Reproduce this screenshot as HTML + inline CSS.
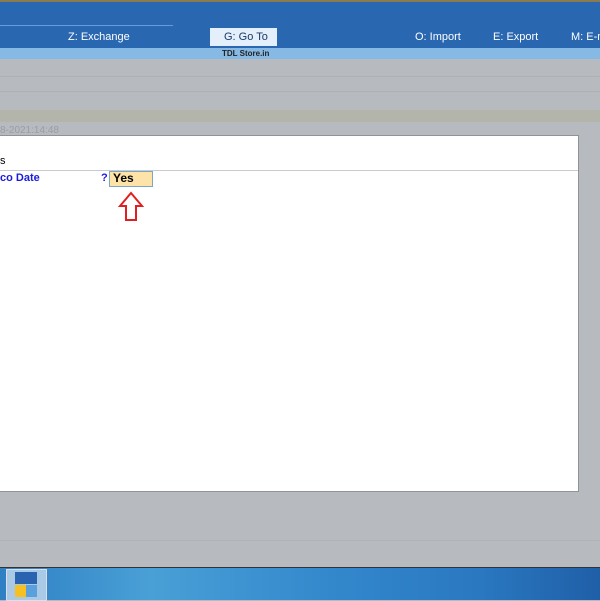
<!DOCTYPE html>
<html><head><style>
body{margin:0;width:600px;height:600px;overflow:hidden;background:#b7bbbf;font-family:"Liberation Sans",sans-serif;position:relative}
div{position:absolute}
.m{top:31px;color:#fff;font-size:11px}
</style></head><body>
<div style="left:0;top:0;width:600px;height:2px;background:#8a7a50"></div>
<div style="left:0;top:2px;width:600px;height:46px;background:#2a67b1"></div>
<div style="left:0;top:25px;width:173px;height:1px;background:#6d9ad2"></div>
<div class="m" style="left:68px">Z:&nbsp;Exchange</div>
<div style="left:210px;top:28px;width:67px;height:18px;background:#e3effa"></div>
<div class="m" style="left:224px;color:#1a3a6a">G:&nbsp;Go To</div>
<div class="m" style="left:415px">O:&nbsp;Import</div>
<div class="m" style="left:493px">E:&nbsp;Export</div>
<div class="m" style="left:571px;white-space:nowrap">M:&nbsp;E-m</div>
<div style="left:0;top:48px;width:600px;height:11px;background:#86b9e4"></div>
<div style="left:222px;top:49px;font-size:8px;font-weight:bold;color:#222">TDL Store.in</div>
<div style="left:0;top:76px;width:600px;height:1px;background:#adb1b5"></div>
<div style="left:0;top:91px;width:600px;height:1px;background:#adb1b5"></div>
<div style="left:0;top:110px;width:600px;height:12px;background:#b3b5aa"></div>
<div style="left:0;top:125px;font-size:10px;color:#9a9ea2">8-2021:14:48</div>
<div style="left:-2px;top:135px;width:579px;height:355px;background:#fff;border:1px solid #8f9398"></div>
<div style="left:0;top:170px;width:578px;height:1px;background:#c8ccd0"></div>
<div style="left:0;top:155px;font-size:11px;color:#000">s</div>
<div style="left:0;top:172px;font-size:11px;font-weight:bold;color:#1a1ae0">co Date</div>
<div style="left:101px;top:172px;font-size:11px;font-weight:bold;color:#1a1ae0">?</div>
<div style="left:109px;top:171px;width:42px;height:14px;background:#fde3a8;border:1px solid #7aa6c8"></div>
<div style="left:113px;top:171px;font-size:12px;font-weight:bold;color:#000">Yes</div>
<svg style="position:absolute;left:118px;top:191px" width="28" height="32"><path d="M13 2 L24 15 L18 15 L18 29 L8 29 L8 15 L2 15 Z" fill="#fff" stroke="#e02020" stroke-width="2"/></svg>
<div style="left:0;top:540px;width:600px;height:1px;background:#afb3b7"></div>
<div style="left:0;top:568px;width:600px;height:32px;background:linear-gradient(90deg,#2f7fc3,#49a0d6 25%,#3388cc 55%,#2a78c0 80%,#1f5fa8)"></div>
<div style="left:0;top:567px;width:600px;height:1px;background:#333"></div>
<div style="left:6px;top:569px;width:39px;height:30px;background:#a9c9e4;border:1px solid #dde"></div>
<div style="left:15px;top:572px;width:22px;height:12px;background:#2a63b0"></div>
<div style="left:15px;top:585px;width:11px;height:12px;background:#f6c022"></div>
<div style="left:26px;top:585px;width:11px;height:12px;background:#5aa0dc"></div>
</body></html>
